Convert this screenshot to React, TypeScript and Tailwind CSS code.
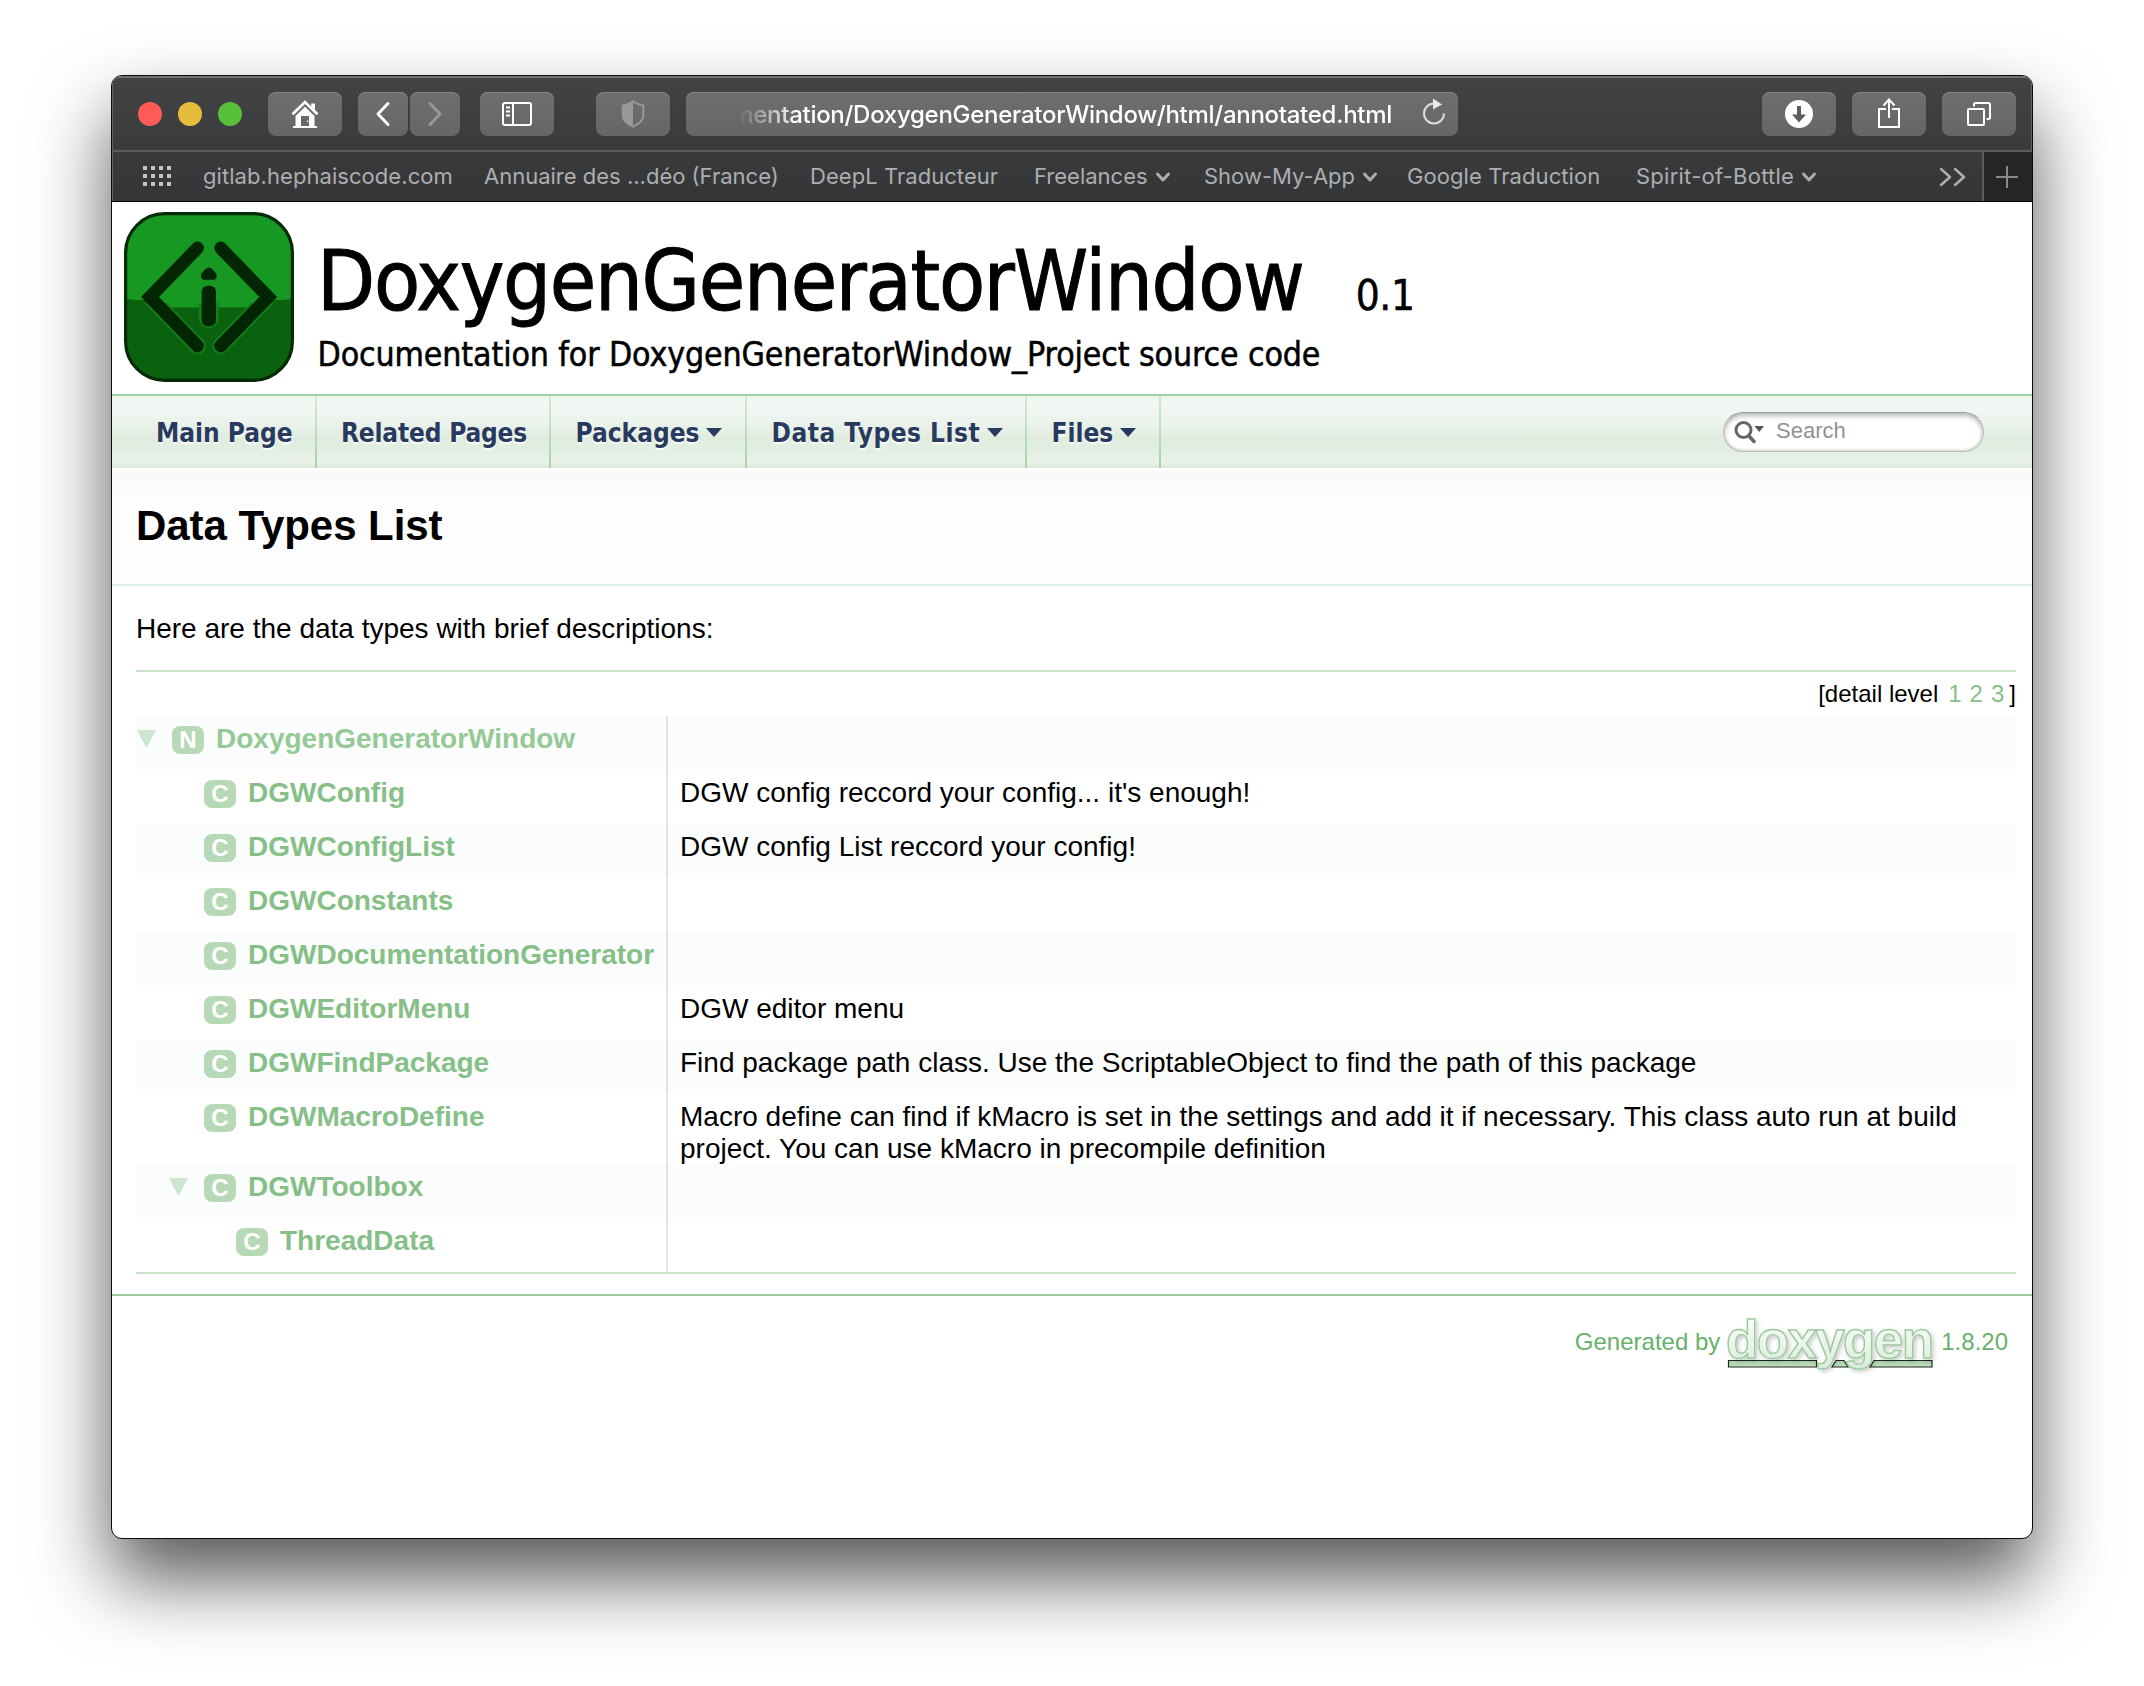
import type { ReactNode } from 'react';

function ToolButton({ className, children }: { className: string; children: ReactNode }) {
  return (
    <div
      className={
        'flex h-11 shrink-0 items-center justify-center rounded-[8px] bg-linear-to-b from-[#6d6e70] to-[#656668] shadow-[inset_0_1px_0_#848587] ' +
        className
      }
    >
      {children}
    </div>
  );
}

function HomeIcon() {
  return (
    <svg width="28" height="28" viewBox="0 0 28 28" className="text-white">
      <path d="M1.500 14.200 14 2.100 26.500 14.200" fill="none" stroke="currentColor" strokeWidth="2.800" />
      <path d="M20.200 3.500H24V10l-3.800-3.600z" fill="currentColor" />
      <path
        fillRule="evenodd"
        d="M14 6.800 23.500 16v10H26v2H2v-2h2.500V16zM10 16v10h8V16z"
        fill="currentColor"
      />
      <rect x="16" y="20.500" width="1.200" height="1.600" fill="currentColor" />
    </svg>
  );
}

function Chevron({ flip }: { flip?: boolean }) {
  return (
    <svg
      width="16"
      height="26"
      viewBox="0 0 16 26"
      className={flip ? 'rotate-180 text-[#97989a]' : 'text-white'}
    >
      <path
        d="M13 2.500 3 13l10 10.500"
        fill="none"
        stroke="currentColor"
        strokeWidth="3"
        strokeLinecap="round"
        strokeLinejoin="round"
      />
    </svg>
  );
}

function SidebarIcon() {
  return (
    <svg width="30" height="24" viewBox="0 0 30 24" fill="none" stroke="#fff" strokeWidth="2">
      <rect x="1" y="1" width="28" height="22" rx="2" />
      <path d="M11 1v22M4 5.500h4M4 9.500h4M4 13.500h4" />
    </svg>
  );
}

function ShieldIcon() {
  return (
    <svg width="24" height="28" viewBox="0 0 24 28">
      <path
        d="M12 1.200c3 2.300 6.500 3.600 10.300 4.300V15c0 5.300-4.300 9-10.300 11.700C6 24 1.700 20.300 1.700 15V5.500C5.500 4.800 9 3.500 12 1.200z"
        fill="none"
        stroke="#97989a"
        strokeWidth="2"
      />
      <path d="M12 1.200V26.700C6 24 1.700 20.300 1.700 15V5.500C5.500 4.800 9 3.500 12 1.200z" fill="#97989a" />
    </svg>
  );
}

function ReloadIcon() {
  return (
    <svg width="24" height="28" viewBox="0 0 24 28">
      <path d="M22 15.500A10 10 0 1 1 12 5.500" fill="none" stroke="#dcddde" strokeWidth="2" />
      <path d="M11 0.500 20 6.500 11 11.500z" fill="#e8e8e9" />
    </svg>
  );
}

function DownloadIcon() {
  return (
    <svg width="28" height="28" viewBox="0 0 28 28">
      <circle cx="14" cy="14" r="14" fill="#fff" />
      <path d="M12 6h4v8.500h5L14 22.500 7 14.500h5z" fill="#5b5c5e" />
    </svg>
  );
}

function ShareIcon() {
  return (
    <svg
      width="24"
      height="32"
      viewBox="0 0 24 32"
      fill="none"
      stroke="#fff"
      strokeWidth="2"
      className="-mt-[2px]"
    >
      <path d="M9 12H2v18h20V12h-7" />
      <path d="M12 21V2.500M6.500 8.500 12 2.500l5.500 6" />
    </svg>
  );
}

function TabsIcon() {
  return (
    <svg width="24" height="24" viewBox="0 0 24 24" fill="none" stroke="#fff" strokeWidth="2">
      <rect x="1" y="7" width="16" height="16" rx="1" />
      <path d="M7 4.500V2.500a1.500 1.500 0 0 1 1.500-1.500h13A1.500 1.500 0 0 1 23 2.500v13A1.500 1.500 0 0 1 21.500 17h-2" />
    </svg>
  );
}

function Bookmark({ label, className, menu }: { label: string; className: string; menu?: boolean }) {
  return (
    <div className={'flex shrink-0 whitespace-nowrap leading-[26px] ' + className}>
      {label}
      {menu && (
        <svg width="16" height="12" viewBox="0 0 16 12" className="mt-[8px] ml-[7px]">
          <path
            d="M2.500 3 8 9l5.500-6"
            fill="none"
            stroke="currentColor"
            strokeWidth="3"
            strokeLinecap="round"
            strokeLinejoin="round"
          />
        </svg>
      )}
    </div>
  );
}

function ProjectLogo() {
  const strokes = (
    <>
      <path d="M73.500 36 26 85l47.500 49" fill="none" strokeLinecap="round" />
      <path d="M96.700 36l47.500 49-47.500 49" fill="none" strokeLinecap="round" />
    </>
  );
  return (
    <svg width="170" height="170" viewBox="0 0 170 170" className="shrink-0">
      <defs>
        <clipPath id="logo-frame">
          <rect x="1" y="1" width="168" height="168" rx="40" />
        </clipPath>
        <clipPath id="logo-lower">
          <rect x="0" y="91" width="170" height="79" />
        </clipPath>
      </defs>
      <g clipPath="url(#logo-frame)">
        <rect width="170" height="170" fill="#169822" />
        <path d="M0 87l12 1H30V95.500H140V88H158l12-1v83H0z" fill="#0a610e" />
      </g>
      <g clipPath="url(#logo-lower)" stroke="#12801a" strokeWidth="16.500">
        {strokes}
        <rect x="83" y="80" width="3.500" height="28" rx="1.700" />
      </g>
      <g stroke="#022502" strokeWidth="12.800">
        {strokes}
      </g>
      <path
        d="M84.800 55.500l3.200 1.200 4.500 5v3.500l-1.800 2.600H79l-1.800-2.600v-3.500l4.500-5z"
        fill="#022502"
      />
      <rect x="77.700" y="73.700" width="14.300" height="40.500" rx="6" fill="#022502" />
      <rect x="1.600" y="1.600" width="166.800" height="166.800" rx="39" fill="none" stroke="#032b04" strokeWidth="3.200" />
    </svg>
  );
}

function NavItem({ label, className, menu }: { label: string; className: string; menu?: boolean }) {
  return (
    <div className="flex">
      <div
        className={
          'flex pt-[22px] text-[26px] leading-[30px] font-bold whitespace-nowrap text-[#283a5d] [text-shadow:0_2px_2px_rgba(255,255,255,0.9)] ' +
          className
        }
      >
        {label}
        {menu && (
          <svg width="16" height="9" viewBox="0 0 16 9" className="mt-[10px] ml-[7px]">
            <path d="M0 0h16L8 9z" fill="#283a5d" />
          </svg>
        )}
      </div>
      <div className="w-[2px] bg-linear-to-b from-[#d3e8d5] to-[#a5d3a8]" />
    </div>
  );
}

function SearchBox() {
  return (
    <div className="mt-4 flex h-10 w-[261px] rounded-full border border-[#b9bcb9] border-t-[#979a97] bg-white pl-[10px] shadow-[inset_0_3px_5px_rgba(0,0,0,0.28),inset_0_-1px_3px_rgba(0,0,0,0.15)]">
      <svg width="32" height="24" viewBox="0 0 32 24" className="mt-[7px]">
        <circle cx="9.500" cy="10" r="7.500" fill="none" stroke="#666" strokeWidth="3" />
        <path d="M14.500 15.500 20 21.500" stroke="#666" strokeWidth="3.500" strokeLinecap="round" />
        <path d="M20.500 6h9.500l-4.750 6z" fill="#555" />
      </svg>
      <span className="mt-[5px] ml-[10px] text-[22px] leading-[25px] text-[#929292]">Search</span>
    </div>
  );
}

type Entry = { kind: 'N' | 'C'; name: string; brief?: string; indent: string; open?: boolean; height: string };

const entries: Entry[] = [
  { kind: 'N', name: 'DoxygenGeneratorWindow', indent: 'pl-0', open: true, height: 'h-[54px]' },
  { kind: 'C', name: 'DGWConfig', brief: "DGW config reccord your config... it's enough!", indent: 'pl-[68px]', height: 'h-[54px]' },
  { kind: 'C', name: 'DGWConfigList', brief: 'DGW config List reccord your config!', indent: 'pl-[68px]', height: 'h-[54px]' },
  { kind: 'C', name: 'DGWConstants', indent: 'pl-[68px]', height: 'h-[54px]' },
  { kind: 'C', name: 'DGWDocumentationGenerator', indent: 'pl-[68px]', height: 'h-[54px]' },
  { kind: 'C', name: 'DGWEditorMenu', brief: 'DGW editor menu', indent: 'pl-[68px]', height: 'h-[54px]' },
  {
    kind: 'C',
    name: 'DGWFindPackage',
    brief: 'Find package path class. Use the ScriptableObject to find the path of this package',
    indent: 'pl-[68px]',
    height: 'h-[54px]',
  },
  {
    kind: 'C',
    name: 'DGWMacroDefine',
    brief:
      'Macro define can find if kMacro is set in the settings and add it if necessary. This class auto run at build project. You can use kMacro in precompile definition',
    indent: 'pl-[68px]',
    height: 'h-[70px]',
  },
  { kind: 'C', name: 'DGWToolbox', indent: 'pl-8', open: true, height: 'h-[54px]' },
  { kind: 'C', name: 'ThreadData', indent: 'pl-[100px]', height: 'h-[54px]' },
];

function DirectoryRow({ entry, shaded }: { entry: Entry; shaded: boolean }) {
  return (
    <div className={'flex ' + entry.height + (shaded ? ' bg-[#fafdfb]' : '')}>
      <div className={'flex w-[530px] shrink-0 ' + entry.indent}>
        {entry.open && (
          <div className="w-9 shrink-0 pt-[14px] pl-px">
            <svg width="19" height="18" viewBox="0 0 19 18">
              <path d="M0 0h19L9.500 18z" fill="#cde6cf" />
            </svg>
          </div>
        )}
        <div className="mt-[10px] h-7 w-8 shrink-0 rounded-[8px] bg-[#b8d9b8] text-center text-[24px] leading-[27px] font-bold text-white">
          {entry.kind}
        </div>
        <div
          className={
            'ml-3 pt-[7px] leading-[31px] font-bold whitespace-nowrap ' +
            (entry.kind === 'N' ? 'text-[#95c996]' : 'text-[#86bf87]')
          }
        >
          {entry.name}
        </div>
      </div>
      <div className="w-[2px] shrink-0 bg-black/10" />
      <div className="pt-[7px] pl-3 leading-8">{entry.brief}</div>
    </div>
  );
}

function DoxygenLogo() {
  return (
    <svg width="219" height="82" viewBox="0 -8 219 82" className="-mt-2 shrink-0">
      <defs>
        <linearGradient id="dox-fill" x1="0" y1="0" x2="0" y2="1">
          <stop offset="0.150" stopColor="#fbfdfb" />
          <stop offset="1" stopColor="#d9ecda" />
        </linearGradient>
        <linearGradient id="dox-bar" x1="0" y1="0" x2="0" y2="1">
          <stop offset="0" stopColor="#a3cfa4" />
          <stop offset="1" stopColor="#c3e2c4" />
        </linearGradient>
        <filter id="dox-shadow" x="-5%" y="-10%" width="112%" height="125%">
          <feDropShadow dx="2" dy="2" stdDeviation="2" floodColor="#000" floodOpacity="0.200" />
        </filter>
      </defs>
      <g fill="url(#dox-bar)" stroke="#222" strokeWidth="1.200">
        <path d="M6.500 48.500h88v6.500h-88z" />
        <path d="M114 48.500h8l4 6.500h-16z" />
        <path d="M152 48.500h58v6.500h-62z" />
      </g>
      <g
        fontFamily="'Liberation Sans', Arial, sans-serif"
        fontWeight="700"
        fontSize="53"
        filter="url(#dox-shadow)"
      >
        <text
          x="4"
          y="45.500"
          textLength="208"
          lengthAdjust="spacing"
          fill="url(#dox-fill)"
          stroke="#9acb9c"
          strokeWidth="1.400"
        >
          doxygen
        </text>
      </g>
    </svg>
  );
}

export default function App() {
  return (
    <div className="h-[1686px] w-[2144px] overflow-hidden bg-white px-[111px] pt-[75px] font-['Liberation_Sans',Arial,sans-serif] text-[28px] text-black">
      <div className="h-[1464px] w-[1922px] overflow-hidden rounded-[11px] border border-[#0a0c0b] bg-white shadow-[0_40px_76px_rgba(0,0,0,0.66)]">
        <div className="bg-linear-to-b from-[#424345] to-[#343537] font-['Inter',sans-serif] shadow-[inset_0_2px_0_#6f7271,inset_1px_0_0_#626364,inset_-1px_0_0_#626364]">
          <div className="flex h-[74px] pt-4 pl-[26px]">
            <div className="flex h-11 shrink-0 items-center gap-4">
              <div className="size-6 rounded-full bg-[#fe5b56]" />
              <div className="size-6 rounded-full bg-[#e5bd3b]" />
              <div className="size-6 rounded-full bg-[#57c038]" />
            </div>
            <ToolButton className="ml-[26px] w-[74px]">
              <HomeIcon />
            </ToolButton>
            <ToolButton className="ml-4 w-[50px]">
              <Chevron />
            </ToolButton>
            <ToolButton className="ml-[2px] w-[50px]">
              <Chevron flip />
            </ToolButton>
            <ToolButton className="ml-5 w-[74px]">
              <SidebarIcon />
            </ToolButton>
            <ToolButton className="ml-[42px] w-[74px]">
              <ShieldIcon />
            </ToolButton>
            <ToolButton className="ml-4 w-[772px]">
              <div className="flex w-full items-start justify-end pr-[12px]">
                <div className="mt-px text-[24px] leading-[29px] font-medium tracking-[-0.280px] whitespace-nowrap text-white mask-[linear-gradient(to_right,transparent_6px,black_66px)]">
                  mentation/DoxygenGeneratorWindow/html/annotated.html
                </div>
                <div className="-mt-px ml-[30px]">
                  <ReloadIcon />
                </div>
              </div>
            </ToolButton>
            <ToolButton className="ml-[304px] w-[74px]">
              <DownloadIcon />
            </ToolButton>
            <ToolButton className="ml-4 w-[74px]">
              <ShareIcon />
            </ToolButton>
            <ToolButton className="ml-4 w-[74px]">
              <TabsIcon />
            </ToolButton>
          </div>
          <div className="h-[2px] bg-[#5b5c5e]" />
          <div className="flex h-[50px] border-b border-black text-[22px] text-[#adaeaf]">
            <div className="mt-[14px] ml-[31px] grid h-5 w-[60px] shrink-0 grid-cols-[repeat(4,4px)] grid-rows-[repeat(3,4px)] gap-1">
              {Array.from({ length: 12 }, (_, i) => (
                <span key={i} className="bg-[#c3c4c5]" />
              ))}
            </div>
            <div className="flex pt-[11px]">
              <Bookmark label="gitlab.hephaiscode.com" className="w-[281px] tracking-[0.060px]" />
              <Bookmark label="Annuaire des ...déo (France)" className="w-[326px]" />
              <Bookmark label="DeepL Traducteur" className="w-[224px] tracking-[0.050px]" />
              <Bookmark label="Freelances" className="w-[170px]" menu />
              <Bookmark label="Show-My-App" className="w-[203px]" menu />
              <Bookmark label="Google Traduction" className="w-[229px] tracking-[0.080px]" />
              <Bookmark label="Spirit-of-Bottle" className="w-[303px] tracking-[0.250px]" menu />
            </div>
            <svg width="30" height="20" viewBox="0 0 30 20" className="mt-[15px] -ml-px shrink-0">
              <path
                d="M3 2l9 8-9 8M17 2l9 8-9 8"
                fill="none"
                stroke="currentColor"
                strokeWidth="2.500"
                strokeLinecap="round"
                strokeLinejoin="round"
              />
            </svg>
            <div className="ml-auto flex w-[50px] shrink-0 justify-center border-l-2 border-[#5b5c5e] bg-[#242526] pt-[14px] pr-[2px]">
              <svg width="22" height="22" viewBox="0 0 22 22">
                <path d="M11 0v22M0 11h22" stroke="#88898b" strokeWidth="2" />
              </svg>
            </div>
          </div>
        </div>

        <div className="flex h-[192px] pt-[10px] pl-3">
          <ProjectLogo />
          <div className="ml-[23px] pt-5 font-['DejaVu_Sans_Condensed','DejaVu_Sans',sans-serif] whitespace-nowrap">
            <div className="flex h-[98px] items-baseline">
              <span className="text-[84px] leading-[98px] tracking-[-1.300px] [-webkit-text-stroke:1px_black]">
                DoxygenGeneratorWindow
              </span>
              <span className="ml-[52px] text-[42px] leading-[49px] tracking-[-0.300px] [-webkit-text-stroke:0.500px_black]">
                0.1
              </span>
            </div>
            <div className="mt-[5px] ml-[0.500px] text-[33.600px] leading-[39px] tracking-[-0.120px] [-webkit-text-stroke:0.500px_black]">
              Documentation for DoxygenGeneratorWindow_Project source code
            </div>
          </div>
        </div>

        <div className="flex h-[74px] border-t-2 border-[#a2d0a5] bg-[linear-gradient(to_bottom,#eaf4eb_0px,#f3f8f4_8px,#e8f1e9_32px,#dfecdf_42px,#e1eee2_52px,#e9f2e9_66px,#dbe9dc_72px)]">
          <div className="flex pl-[44px] font-['DejaVu_Sans_Condensed','DejaVu_Sans',sans-serif]">
            <NavItem label="Main Page" className="w-[159px]" />
            <NavItem label="Related Pages" className="w-[232px] pl-[24px] tracking-[-0.180px]" />
            <NavItem label="Packages" className="w-[194px] pl-[24.500px]" menu />
            <NavItem label="Data Types List" className="w-[278px] pl-[24.500px] tracking-[0.500px]" menu />
            <NavItem label="Files" className="w-[132px] pl-[24.500px]" menu />
          </div>
          <div className="mr-12 ml-auto">
            <SearchBox />
          </div>
        </div>

        <div className="h-[118px] border-t-2 border-b-2 border-t-white border-b-[#deede1] bg-[linear-gradient(to_bottom,#f8faf8_0px,#fafcfa_18px,#fdfdfd_22px)] pt-8 pl-6 text-[42px] leading-[47px] font-bold tracking-[-0.050px]">
          Data Types List
        </div>

        <div className="pr-4 pl-6">
          <div className="h-[84px] pt-[27px] leading-[31px]">Here are the data types with brief descriptions:</div>
          <div className="border-t-2 border-b-2 border-[#cae3cb]">
            <div className="flex h-[44px] justify-end pt-2 text-[24px] leading-[27px] whitespace-nowrap">
              <span>[detail level</span>
              <span className="ml-[10px] flex gap-2 text-[#86bf87]">
                <span>1</span>
                <span>2</span>
                <span>3</span>
              </span>
              <span className="ml-[5px]">]</span>
            </div>
            {entries.map((entry, i) => (
              <DirectoryRow key={entry.name} entry={entry} shaded={i % 2 === 0} />
            ))}
          </div>
        </div>

        <div className="mt-5 flex justify-end border-t-2 border-[#9bcb9d] pt-4 pr-6 text-[24px] leading-[27px] whitespace-nowrap text-[#68b06b]">
          <span className="mt-4 mr-[2px]">Generated by</span>
          <DoxygenLogo />
          <span className="mt-4">1.8.20</span>
        </div>
      </div>
    </div>
  );
}
